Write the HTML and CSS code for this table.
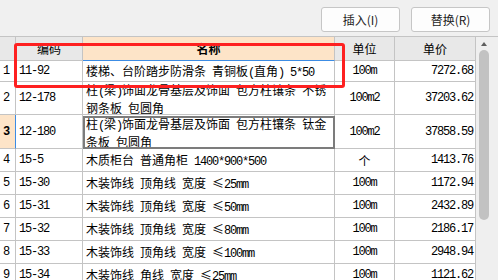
FILE: index.html
```html
<!DOCTYPE html>
<html lang="zh">
<head>
<meta charset="utf-8">
<link rel="stylesheet" href="styles.css">
</head>
<body>
<div class="toolbar">
  <button class="btn">插入(I)</button>
  <button class="btn">替换(R)</button>
</div>
<div class="grid">
  <div class="table">
    <div class="row head">
      <div class="c no"></div>
      <div class="c code ctr">编码</div>
      <div class="c name ctr cur-col">名称</div>
      <div class="c unit">单位</div>
      <div class="c price ctr">单价</div>
    </div>
    <div class="row r1">
      <div class="c no m">1</div>
      <div class="c code m">11-92</div>
      <div class="c name"><span>楼梯、台阶踏步防滑条<span class="m"> </span>青铜板<span class="m">(</span>直角<span class="m">) 5*50</span></span></div>
      <div class="c unit m">100m</div>
      <div class="c price m">7272.68</div>
    </div>
    <div class="row r2">
      <div class="c no m">2</div>
      <div class="c code m">12-178</div>
      <div class="c name wrap">柱<span class="m">(</span>梁<span class="m">)</span>饰面龙骨基层及饰面<span class="m"> </span>包方柱镶条<span class="m"> </span>不锈<br>钢条板<span class="m"> </span>包圆角</div>
      <div class="c unit m">100m2</div>
      <div class="c price m">37203.62</div>
    </div>
    <div class="row r3">
      <div class="c no m sel">3</div>
      <div class="c code m">12-180</div>
      <div class="c name wrap cur">柱<span class="m">(</span>梁<span class="m">)</span>饰面龙骨基层及饰面<span class="m"> </span>包方柱镶条<span class="m"> </span>钛金<br>条板<span class="m"> </span>包圆角</div>
      <div class="c unit m">100m2</div>
      <div class="c price m">37858.59</div>
    </div>
    <div class="row">
      <div class="c no m">4</div>
      <div class="c code m">15-5</div>
      <div class="c name"><span>木质柜台<span class="m"> </span>普通角柜<span class="m"> 1400*900*500</span></span></div>
      <div class="c unit">个</div>
      <div class="c price m">1413.76</div>
    </div>
    <div class="row">
      <div class="c no m">5</div>
      <div class="c code m">15-30</div>
      <div class="c name"><span>木装饰线<span class="m"> </span>顶角线<span class="m"> </span>宽度<span class="m"> </span>≤<span class="m">25mm</span></span></div>
      <div class="c unit m">100m</div>
      <div class="c price m">1172.94</div>
    </div>
    <div class="row">
      <div class="c no m">6</div>
      <div class="c code m">15-31</div>
      <div class="c name"><span>木装饰线<span class="m"> </span>顶角线<span class="m"> </span>宽度<span class="m"> </span>≤<span class="m">50mm</span></span></div>
      <div class="c unit m">100m</div>
      <div class="c price m">2432.89</div>
    </div>
    <div class="row">
      <div class="c no m">7</div>
      <div class="c code m">15-32</div>
      <div class="c name"><span>木装饰线<span class="m"> </span>顶角线<span class="m"> </span>宽度<span class="m"> </span>≤<span class="m">80mm</span></span></div>
      <div class="c unit m">100m</div>
      <div class="c price m">2186.17</div>
    </div>
    <div class="row">
      <div class="c no m">8</div>
      <div class="c code m">15-33</div>
      <div class="c name"><span>木装饰线<span class="m"> </span>顶角线<span class="m"> </span>宽度<span class="m"> </span>≤<span class="m">100mm</span></span></div>
      <div class="c unit m">100m</div>
      <div class="c price m">2948.94</div>
    </div>
    <div class="row">
      <div class="c no m">9</div>
      <div class="c code m">15-34</div>
      <div class="c name"><span>木装饰线<span class="m"> </span>角线<span class="m"> </span>宽度<span class="m"> </span>≤<span class="m">25mm</span></span></div>
      <div class="c unit m">100m</div>
      <div class="c price m">1121.62</div>
    </div>
  </div>
  <div class="scrollbar">
    <div class="arrow"></div>
    <div class="thumb"></div>
  </div>
</div>
<div class="mark"></div>
</body>
</html>
```
FILE: styles.css
```css
html, body {
  margin: 0;
  padding: 0;
}
body {
  width: 498px;
  height: 280px;
  overflow: hidden;
  background: #f0f0f0;
  font-family: "Noto Sans CJK SC", sans-serif;
  font-size: 12px;
  color: #000;
  position: relative;
}
.toolbar {
  height: 36px;
  box-sizing: border-box;
  display: flex;
  justify-content: flex-end;
  align-items: flex-start;
  gap: 11px;
  padding: 7px 8px 0 0;
}
.btn {
  width: 79px;
  height: 25px;
  box-sizing: border-box;
  background: #fdfdfd;
  border: 1px solid #c6c6c6;
  border-radius: 3px;
  font-family: "Noto Sans CJK SC", sans-serif;
  font-size: 12px;
  color: #1e1e1e;
  padding: 0;
  line-height: 22px;
}
.grid {
  display: flex;
  border-top: 1px solid #c4c4c4;
}
.table {
  width: 476px;
  background: #fff;
  flex: none;
}
.row {
  display: flex;
  height: 23px;
}
.row.head { height: 24px; background: #e8e8e8; }
.row.r1 { height: 21px; }
.row.r2 { height: 33px; }
.row.r3 { height: 34px; }
.c {
  box-sizing: border-box;
  border-right: 1px solid #c4c4c4;
  border-bottom: 1px solid #c4c4c4;
  display: flex;
  align-items: center;
  padding: 0 3px;
  white-space: pre;
  overflow: visible;
  position: relative;
  flex: none;
}
.m {
  font-family: "Liberation Mono", monospace;
  font-size: 12px;
  letter-spacing: -1.2px;
}
.no { width: 16px; padding: 0 0 0 3px; }
.code { width: 67px; }
.name { width: 252px; }
.unit { width: 60px; justify-content: center; }
.price { width: 81px; justify-content: flex-end; padding-right: 2px; }
.ctr { justify-content: center; }
.head .c { padding: 0; }
.cur-col {
  background: #fde4c8;
  font-weight: bold;
  border-bottom-color: #3c8ce4;
}
.wrap {
  white-space: normal;
  line-height: 15px;
  display: block;
  padding-top: 0;
}
.r3 .wrap { padding-top: 1px; }
.sel {
  background: #fde4c8;
  border-right-color: #3c8ce4;
  font-weight: bold;
}
.cur::after {
  content: "";
  position: absolute;
  top: 1px;
  left: 0;
  right: -1px;
  bottom: -1px;
  border: 2px solid #7c7c7c;
}
.scrollbar {
  flex: 1;
  height: 243px;
  background: #efefef;
  display: flex;
  flex-direction: column;
  align-items: flex-start;
  padding-left: 3px;
}
.arrow {
  width: 0;
  height: 0;
  border-left: 3.5px solid transparent;
  border-right: 3.5px solid transparent;
  border-bottom: 4px solid #5e5e5e;
  margin: 5px 0 0 1.5px;
}
.thumb {
  width: 10px;
  height: 170px;
  margin-top: 4px;
  background: #c2c2c2;
  border-radius: 5px;
}
.mark {
  position: absolute;
  left: 14px;
  top: 43px;
  width: 331px;
  height: 45px;
  box-sizing: border-box;
  border: 3px solid #fe2020;
  border-radius: 3px;
}
```
